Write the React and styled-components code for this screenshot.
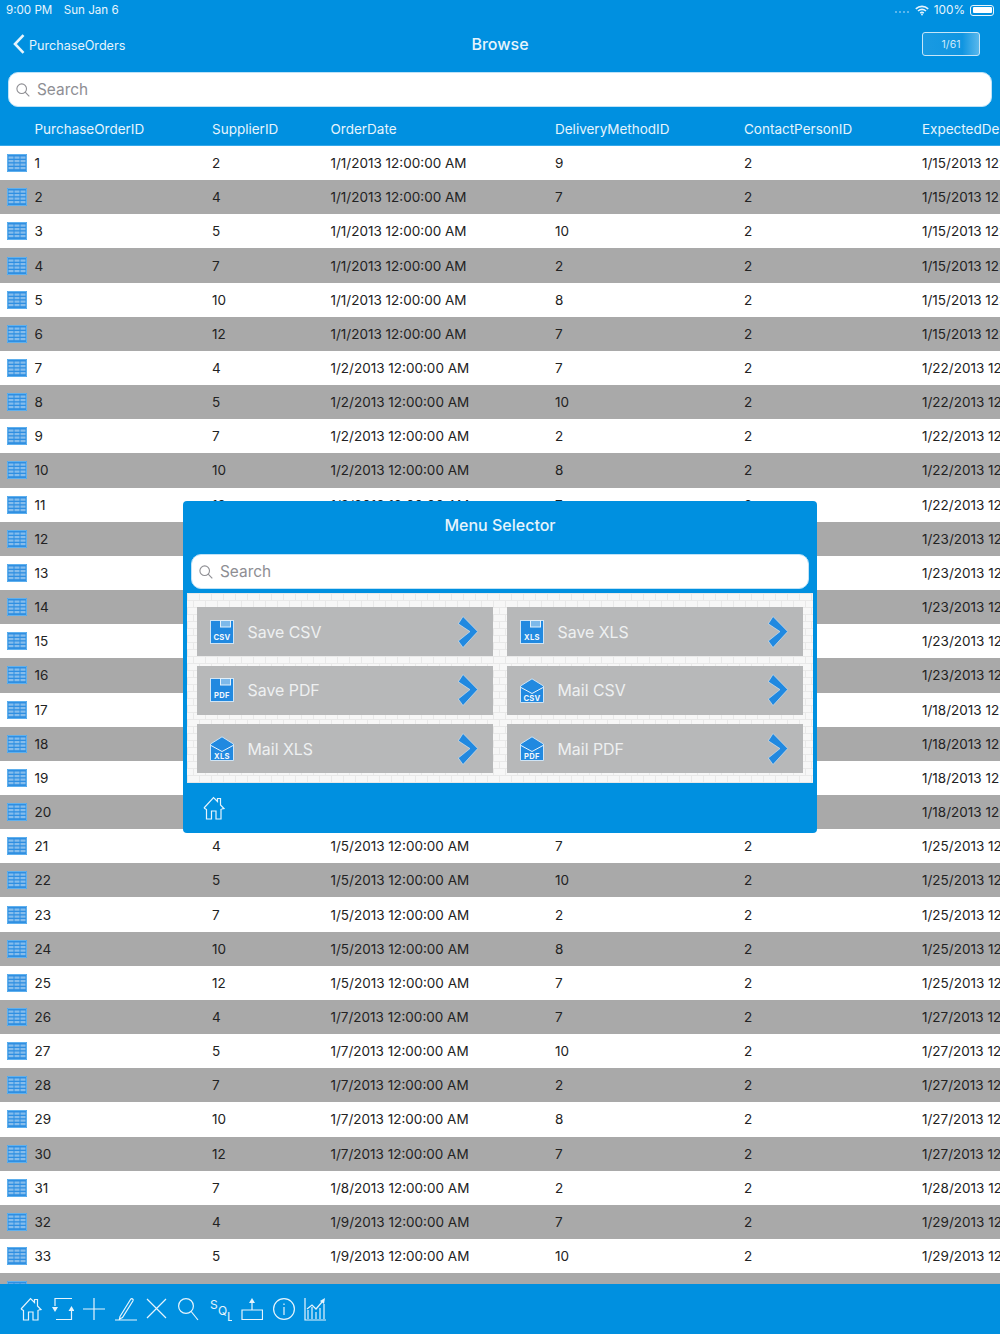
import React from "react";
import styled, { createGlobalStyle } from "styled-components";

const BLUE = "#0090e0";
const ICON_BLUE = "#2189e0";

const brick = `url("data:image/svg+xml,%3Csvg xmlns='http://www.w3.org/2000/svg' width='24' height='14'%3E%3Cpath d='M0 .5H24M0 7.5H24M.5 0V7M12.5 0V7M6.5 7V14M18.5 7V14' stroke='%23e9e9e9' fill='none'/%3E%3C/svg%3E")`;

const GlobalStyle = createGlobalStyle`
  * {
    box-sizing: border-box;
  }

  html, body {
    margin: 0;
    padding: 0;
    background: white;
    font-family: Inter, "Liberation Sans", sans-serif;
  }
`;

const Screen = styled.div`
  position: relative;
  width: 1000px;
  height: 1334px;
  display: flex;
  flex-direction: column;
  overflow: hidden;
  background: white;
`;

const StatusBar = styled.div`
  height: 20px;
  flex: none;
  background: ${BLUE};
  color: #e6f4fc;
  font-size: 11.6px;
  display: flex;
  align-items: center;
  padding: 0 6px;
  gap: 11.5px;
`;

const StatusRight = styled.div`
  margin-left: auto;
  display: flex;
  align-items: center;
  gap: 5px;
  font-size: 11.8px;
`;

const SignalDots = styled.div`
  display: flex;
  gap: 2px;
  margin-right: 1px;
  padding-top: 4px;
`;

const SignalDot = styled.span`
  width: 2px;
  height: 2px;
  background: #5cb6ec;
`;

const Battery = styled.div`
  width: 24px;
  height: 11px;
  padding: 1.5px;
  border: 1px solid #e6f4fc;
  border-radius: 3px;

  &::before {
    content: "";
    display: block;
    height: 100%;
    background: white;
    border-radius: 1px;
  }
`;

const NavBar = styled.div`
  height: 52px;
  flex: none;
  background: ${BLUE};
  display: grid;
  grid-template-columns: 1fr auto 1fr;
  align-items: center;
  padding: 0 20px 4px;
`;

const BackLink = styled.div`
  display: flex;
  align-items: center;
  gap: 4px;
  margin-left: -7px;
  color: #e6f4fc;
  font-size: 12.6px;
`;

const BackLabel = styled.span`
  padding-top: 2px;
`;

const NavTitle = styled.div`
  color: #e6f4fc;
  font-size: 16px;
  font-weight: 500;
`;

const PageBadge = styled.div`
  justify-self: end;
  width: 58px;
  height: 24px;
  border: 1.5px solid #c6e6f8;
  border-radius: 3px;
  background: linear-gradient(90deg, #1a9ae2, #0f95e1 70%, #5ab8ec);
  color: #cfeafa;
  font-size: 10.5px;
  display: flex;
  align-items: center;
  justify-content: center;
`;

const SearchWrap = styled.div`
  flex: none;
  background: ${BLUE};
  padding: 0 8px 1px;
`;

const SearchBox = styled.div`
  height: 35px;
  background: white;
  border-radius: 10px;
  border: 1px solid #bfe2f7;
  display: flex;
  align-items: center;
  gap: 7px;
  padding-left: 7px;
  color: #8e8e93;
  font-size: 15.4px;
`;

const Cells = styled.div`
  display: grid;
  grid-template-columns: 34.5px 177.5px 118.5px 224.5px 189px 178px 200px;
  align-items: center;
  white-space: nowrap;
  font-size: 13.5px;
`;

const HeadRow = styled(Cells)`
  height: 38px;
  flex: none;
  background: ${BLUE};
  color: #e6f4fc;
  border-bottom: 1px solid #35a8ea;
  padding-top: 4px;
`;

const Table = styled.div`
  flex: 1;
  overflow: hidden;
`;

const DataRow = styled(Cells)`
  height: 34.16px;
  color: #222;
  background: ${(p) => (p.$alt ? "#a9a9a9" : "white")};
`;

const RowIcon = styled.div`
  padding-left: 7px;
  display: flex;
`;

const ToolBar = styled.div`
  height: 50px;
  flex: none;
  background: ${BLUE};
  display: flex;
  align-items: center;
  gap: 9.6px;
  padding-left: 20px;
`;

const Modal = styled.div`
  position: absolute;
  left: 183px;
  top: 501px;
  width: 634px;
  height: 332px;
  background: ${BLUE};
  border-radius: 4px;
  display: flex;
  flex-direction: column;
`;

const ModalTitle = styled.div`
  height: 53px;
  flex: none;
  color: #e6f4fc;
  font-size: 16px;
  font-weight: 500;
  display: flex;
  align-items: center;
  justify-content: center;
  padding-bottom: 5px;
`;

const MenuPanel = styled.div`
  margin: 3px 4px 0;
  height: 190px;
  padding: 14px 10px 10px;
  background-color: #f7f7f7;
  background-image: ${brick};
  display: grid;
  grid-template-columns: 1fr 1fr;
  grid-auto-rows: 49px;
  column-gap: 14px;
  row-gap: 9.7px;
`;

const MenuItem = styled.div`
  background: #b7b8b9;
  display: flex;
  align-items: center;
  padding: 0 15px 0 13px;
  gap: 13.5px;
  color: #eef0f1;
  font-size: 15.9px;
`;

const MenuLabel = styled.span`
  flex: 1;
  padding-top: 1px;
`;

const ModalFooter = styled.div`
  flex: 1;
  display: flex;
  align-items: center;
  padding: 0 0 0 20px;
`;

const Line = ({ children, w = 22, h = 24 }) => (
  <svg width={w} height={h} viewBox={`0 0 ${w} ${h}`} fill="none" stroke="#e6f4fc" strokeWidth="1.2">
    {children}
  </svg>
);

const HomeIcon = () => (
  <Line>
    <path d="M1 12L10.5 1.5L14.5 5.5V2.5H17.5V9L21 12.5L18.5 13M1 12L3.5 13.5V23H8.5V15H13V23H18V13" />
  </Line>
);

const GlassIcon = ({ size = 14, color = "#8e8e93" }) => (
  <svg width={size} height={size} viewBox="0 0 14 14" fill="none" stroke={color} strokeWidth="1.1">
    <circle cx="5.7" cy="5.7" r="4.8" />
    <path d="M9.2 9.2L13.3 13.3" />
  </svg>
);

const TOOL_ICONS = [
  <HomeIcon key="home" />,
  <Line key="swap">
    <path d="M3 9V1.5H20M4 22.5H19.5V14" />
    <path d="M0 10H6L3 15ZM16.5 14H22.5L19.5 9Z" fill="#e6f4fc" stroke="none" />
  </Line>,
  <Line key="add">
    <path d="M0 12H22M11 1V23" />
  </Line>,
  <Line key="edit">
    <path d="M0 23H22M5 19.5L15.5 2.5C16.5 1 18.8 2 18 3.8L7.5 20.5L4.5 22Z" />
  </Line>,
  <Line key="delete">
    <path d="M1 2L20 21M20 2L1 21" />
  </Line>,
  <Line key="find">
    <circle cx="8" cy="9" r="7.4" />
    <path d="M13.2 14.5L20 23" />
  </Line>,
  <svg key="sql" width="22" height="26" viewBox="0 0 22 26" fill="#e6f4fc">
    <text x="0" y="13" fontSize="12" fontFamily="Inter, sans-serif">S</text>
    <text x="8" y="19" fontSize="12" fontFamily="Inter, sans-serif">Q</text>
    <text x="17" y="25" fontSize="12" fontFamily="Inter, sans-serif">L</text>
  </svg>,
  <Line key="upload">
    <path d="M1 13H21.5V22.5H1ZM11 13V6" />
    <path d="M8 6H14L11 1Z" fill="#e6f4fc" stroke="none" />
  </Line>,
  <Line key="info">
    <circle cx="11" cy="12" r="10.4" />
    <path d="M11 10V18M11 6.5V8" />
  </Line>,
  <Line key="chart">
    <path d="M1 1V23H22M4 22V13M8 22V10M12 22V15M16 22V11M20 22V7" />
    <path d="M3 12L8 8L12 12L18 5" />
    <path d="M16 4L21 1L20 7Z" fill="#e6f4fc" stroke="none" />
  </Line>,
];

const GridIcon = () => (
  <svg width="20" height="18" viewBox="0 0 20 18">
    <rect width="20" height="18" fill="#2f8fe2" />
    <path d="M.5 .5H19.5V17.5H.5Z" fill="none" stroke="#5fb0ee" />
    {[1.5, 7.5, 13.5].map((x) =>
      [2.5, 6, 9.5, 13].map((y) => <rect key={`${x}-${y}`} x={x} y={y} width="5" height="2.2" fill="#86bdec" />)
    )}
  </svg>
);

const Chevron = () => (
  <svg width="20" height="32" viewBox="0 0 20 32">
    <path d="M.3 7.8L5 .5L19.7 15.5L5 31.5L.3 25L12 15.6Z" fill={ICON_BLUE} stroke="#dfe9f0" strokeWidth="0.6" />
  </svg>
);

const IconLabel = ({ y, children }) => (
  <text x="12" y={y} textAnchor="middle" fontSize="7.6" fontWeight="700" letterSpacing="0.3" fontFamily="Inter, sans-serif" fill="#f2f8fd">
    {children}
  </text>
);

const SaveIcon = ({ label }) => (
  <svg width="24" height="24" viewBox="0 0 24 24">
    <rect x=".5" y=".5" width="23" height="23" fill={ICON_BLUE} stroke="#cfe4f5" />
    <rect x="10.5" y=".5" width="10" height="6.5" fill="#7db9ea" stroke="#e3f0fa" />
    <IconLabel y="19.5">{label}</IconLabel>
  </svg>
);

const MailIcon = ({ label }) => (
  <svg width="24" height="25" viewBox="0 0 24 25">
    <path d="M.5 8L12 .8L23.5 8V24.5H.5Z" fill={ICON_BLUE} stroke="#cfe4f5" />
    <path d="M1 9.5L12 15.5L23 9.5" fill="none" stroke="#eef6fc" />
    <IconLabel y="22.5">{label}</IconLabel>
  </svg>
);

const COLUMNS = ["PurchaseOrderID", "SupplierID", "OrderDate", "DeliveryMethodID", "ContactPersonID", "ExpectedDe"];

// supplier, order day, delivery method, expected day
const ORDERS = [
  [2, "1/1", 9, "1/15"], [4, "1/1", 7, "1/15"], [5, "1/1", 10, "1/15"], [7, "1/1", 2, "1/15"],
  [10, "1/1", 8, "1/15"], [12, "1/1", 7, "1/15"], [4, "1/2", 7, "1/22"], [5, "1/2", 10, "1/22"],
  [7, "1/2", 2, "1/22"], [10, "1/2", 8, "1/22"], [12, "1/2", 7, "1/22"], [4, "1/3", 7, "1/23"],
  [5, "1/3", 10, "1/23"], [7, "1/3", 2, "1/23"], [10, "1/3", 8, "1/23"], [12, "1/3", 7, "1/23"],
  [4, "1/4", 7, "1/18"], [5, "1/4", 10, "1/18"], [7, "1/4", 2, "1/18"], [10, "1/4", 8, "1/18"],
  [4, "1/5", 7, "1/25"], [5, "1/5", 10, "1/25"], [7, "1/5", 2, "1/25"], [10, "1/5", 8, "1/25"],
  [12, "1/5", 7, "1/25"], [4, "1/7", 7, "1/27"], [5, "1/7", 10, "1/27"], [7, "1/7", 2, "1/27"],
  [10, "1/7", 8, "1/27"], [12, "1/7", 7, "1/27"], [7, "1/8", 2, "1/28"], [4, "1/9", 7, "1/29"],
  [5, "1/9", 10, "1/29"], [7, "1/9", 2, "1/29"],
];

const MENU = [
  { label: "Save CSV", tag: "CSV", Icon: SaveIcon },
  { label: "Save XLS", tag: "XLS", Icon: SaveIcon },
  { label: "Save PDF", tag: "PDF", Icon: SaveIcon },
  { label: "Mail CSV", tag: "CSV", Icon: MailIcon },
  { label: "Mail XLS", tag: "XLS", Icon: MailIcon },
  { label: "Mail PDF", tag: "PDF", Icon: MailIcon },
];

const Search = () => (
  <SearchWrap>
    <SearchBox>
      <GlassIcon />
      Search
    </SearchBox>
  </SearchWrap>
);

export default function App() {
  return (
    <Screen>
      <GlobalStyle />
      <StatusBar>
        <span>9:00 PM</span>
        <span>Sun Jan 6</span>
        <StatusRight>
          <SignalDots>
            {[0, 1, 2, 3].map((i) => <SignalDot key={i} />)}
          </SignalDots>
          <svg width="14" height="11" viewBox="0 0 14 11" fill="none" stroke="#e6f4fc" strokeWidth="1.6">
            <path d="M.8 3.8C4.4 .6 9.6 .6 13.2 3.8M3 6C5.4 4 8.6 4 11 6M5.2 8.1C6.2 7.3 7.8 7.3 8.8 8.1" />
            <circle cx="7" cy="9.6" r="0.9" fill="#e6f4fc" stroke="none" />
          </svg>
          <span>100%</span>
          <Battery />
        </StatusRight>
      </StatusBar>
      <NavBar>
        <BackLink>
          <svg width="12" height="20" viewBox="0 0 12 20" fill="none" stroke="#e6f4fc" strokeWidth="2.6">
            <path d="M10.5 1.2L2 10L10.5 18.8" />
          </svg>
          <BackLabel>PurchaseOrders</BackLabel>
        </BackLink>
        <NavTitle>Browse</NavTitle>
        <PageBadge>1/61</PageBadge>
      </NavBar>
      <Search />
      <HeadRow>
        <span />
        {COLUMNS.map((c) => <span key={c}>{c}</span>)}
      </HeadRow>
      <Table>
        {ORDERS.map(([supplier, day, method, expected], i) => (
          <DataRow key={i} $alt={i % 2 === 1}>
            <RowIcon><GridIcon /></RowIcon>
            <span>{i + 1}</span>
            <span>{supplier}</span>
            <span>{day}/2013 12:00:00 AM</span>
            <span>{method}</span>
            <span>2</span>
            <span>{expected}/2013 12:00:00 AM</span>
          </DataRow>
        ))}
      </Table>
      <ToolBar>{TOOL_ICONS}</ToolBar>
      <Modal>
        <ModalTitle>Menu Selector</ModalTitle>
        <Search />
        <MenuPanel>
          {MENU.map(({ label, tag, Icon }) => (
            <MenuItem key={label}>
              <Icon label={tag} />
              <MenuLabel>{label}</MenuLabel>
              <Chevron />
            </MenuItem>
          ))}
        </MenuPanel>
        <ModalFooter>
          <HomeIcon />
        </ModalFooter>
      </Modal>
    </Screen>
  );
}
